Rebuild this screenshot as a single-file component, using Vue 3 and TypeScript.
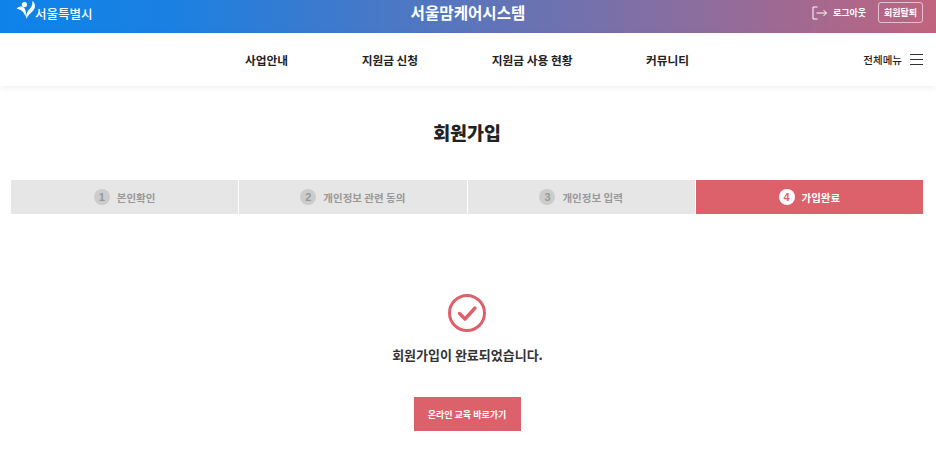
<template>
  <div class="page">
    <header class="top">
      <a class="city">
        <svg class="city-logo" width="20" height="18" viewBox="0 0 20 18">
          <circle cx="8.4" cy="3.6" r="2.6" fill="#fff" />
          <path d="M0.6 7.8C3 4.8 6.8 4.8 8.6 7.4C10 9.4 10.2 12.4 9.6 15.6C8.6 13 7.4 11 5.8 9.8C4.2 8.6 2.6 8 0.6 7.8Z" fill="#fff" />
          <path d="M16.4 0C19.4 2 20 6.6 17 9.8C14.8 12.2 12 14 10.4 17.8C9.4 14 11.2 10.8 13.2 8.6C15.2 6.4 16.8 3.8 16.4 0Z" fill="#fff" />
        </svg>
        <span>서울특별시</span>
      </a>
      <h1 class="system">서울맘케어시스템</h1>
      <div class="top-actions">
        <a class="logout">
          <svg width="16" height="14" viewBox="0 0 16 14" fill="none" stroke="#fff" stroke-width="1">
            <path d="M5.5 1H1V13H5.5" />
            <path d="M4.5 7H14.5M11.5 4L14.5 7L11.5 10" />
          </svg>
          <span>로그아웃</span>
        </a>
        <a class="withdraw">회원탈퇴</a>
      </div>
    </header>

    <nav class="gnb">
      <ul class="menu">
        <li v-for="item in menus" :key="item">{{ item }}</li>
      </ul>
      <a class="all-menu">
        <span>전체메뉴</span>
        <i class="burger"><b></b><b></b><b></b></i>
      </a>
    </nav>

    <main class="content">
      <h2 class="title">회원가입</h2>

      <ol class="steps">
        <li v-for="(step, i) in steps" :key="step" :class="{ on: i === steps.length - 1 }">
          <em>{{ i + 1 }}</em>
          <span>{{ step }}</span>
        </li>
      </ol>

      <div class="done">
        <svg width="38" height="38" viewBox="0 0 38 38" fill="none" stroke="#dd616b">
          <circle cx="19" cy="19" r="17.5" stroke-width="3" />
          <path d="M11.5 19.5L17 25L27 14" stroke-width="3.4" stroke-linecap="round" stroke-linejoin="round" />
        </svg>
        <p>회원가입이 완료되었습니다.</p>
        <a class="edu">온라인 교육 바로가기</a>
      </div>
    </main>
  </div>
</template>

<script setup lang="ts">
const menus: string[] = ["사업안내", "지원금 신청", "지원금 사용 현황", "커뮤니티"]
const steps: string[] = ["본인확인", "개인정보 관련 동의", "개인정보 입력", "가입완료"]
</script>

<style>
html,
body {
  margin: 0;
  background: #fff;
  overflow: hidden;
}
</style>

<style scoped>
.page {
  width: 936px;
  height: 459px;
  overflow: hidden;
  font-family: "Noto Sans CJK KR", "Noto Sans", sans-serif;
  color: #222;
}

.top {
  height: 33px;
  display: flex;
  align-items: center;
  justify-content: space-between;
  position: relative;
  padding: 0 13px 0 16px;
  background: linear-gradient(90deg, #0d83ea 0%, #1a80e2 18%, #c0647f 100%);
  color: #fff;
}

.city {
  display: flex;
  align-items: center;
  font-size: 12.5px;
  font-weight: 500;
  margin-top: -7px;
}

.city-logo {
  margin: -7px -1px 0 0;
}

.system {
  position: absolute;
  left: 0;
  right: 0;
  top: 0;
  margin: 0;
  text-align: center;
  font-size: 15.6px;
  font-weight: 700;
  line-height: 25px;
  pointer-events: none;
}

.top-actions {
  display: flex;
  align-items: center;
  gap: 12px;
  margin-top: -8px;
}

.logout {
  display: flex;
  align-items: center;
  gap: 5px;
  font-size: 9px;
  font-weight: 700;
}

.withdraw {
  width: 45px;
  height: 21px;
  box-sizing: border-box;
  border: 1px solid rgba(255, 255, 255, 0.6);
  border-radius: 3px;
  display: flex;
  align-items: center;
  justify-content: center;
  font-size: 9px;
  font-weight: 700;
}

.gnb {
  height: 53px;
  display: flex;
  align-items: center;
  position: relative;
  background: #fff;
  box-shadow: 0 2px 6px rgba(0, 0, 0, 0.06);
}

.menu {
  list-style: none;
  margin: 0 0 0 245px;
  padding: 0;
  display: flex;
  gap: 73.7px;
  font-size: 11.7px;
  font-weight: 700;
  color: #222;
}

.all-menu {
  position: absolute;
  right: 13px;
  top: 0;
  height: 53px;
  display: flex;
  align-items: center;
  gap: 8px;
  font-size: 10.5px;
  font-weight: 500;
}

.burger {
  display: flex;
  flex-direction: column;
  gap: 4px;
  width: 13px;
}

.burger b {
  display: block;
  height: 1px;
  background: #333;
}

.content {
  padding: 0 13px 0 11px;
}

.title {
  margin: 0;
  padding-top: 33px;
  text-align: center;
  font-size: 18.4px;
  font-weight: 900;
  line-height: 27px;
  color: #222;
}

.steps {
  list-style: none;
  margin: 34px 0 0;
  padding: 0;
  display: grid;
  grid-template-columns: repeat(4, 1fr);
  gap: 1px;
}

.steps li {
  height: 34px;
  display: flex;
  align-items: center;
  justify-content: center;
  gap: 7px;
  background: #e6e6e6;
  color: #999;
  font-size: 10.5px;
  font-weight: 700;
}

.steps em {
  width: 16px;
  height: 16px;
  border-radius: 50%;
  background: #cccccc;
  display: flex;
  align-items: center;
  justify-content: center;
  font-style: normal;
  font-family: "Liberation Sans", sans-serif;
  font-size: 11px;
  font-weight: 700;
  color: #999;
}

.steps li.on {
  background: #dd616b;
  color: #fff;
}

.steps li.on em {
  background: #fff;
  color: #dd616b;
}

.done {
  display: flex;
  flex-direction: column;
  align-items: center;
  padding-top: 80px;
}

.done p {
  margin: 13px 0 0 1px;
  font-size: 13px;
  font-weight: 700;
  line-height: 19px;
  color: #333;
}

.edu {
  margin-top: 33px;
  width: 107px;
  height: 34px;
  display: flex;
  align-items: center;
  justify-content: center;
  background: #dd616b;
  color: #fff;
  font-size: 9px;
  font-weight: 700;
}
</style>
